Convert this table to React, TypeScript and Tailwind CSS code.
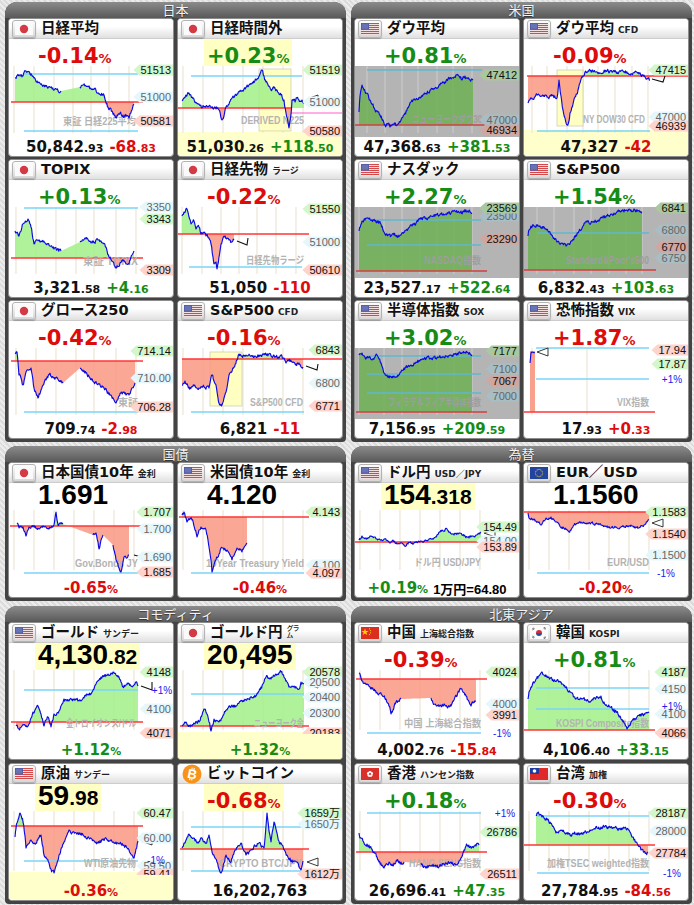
import { useId } from "react";

type TagC = "g" | "r" | "b";
type Sec = "top" | "bond" | "comm";

type Chart = {
  pts: number[][];
  base: number;
  baseX?: [number, number];
  blues?: number[];
  blueX?: [number, number];
  grid?: number[];
  tags: [number, string, TagC][];
  pcts?: [number, number, string][];
  wm: [string, number, number, number];
  gray?: boolean;
  hl?: [number, number, number, number];
  rects?: number[][];
  lines?: [number, number, number, number, string][];
  tri?: [number, number];
  tick?: number[];
  yellowFrom?: number;
  amp?: number;
  noFill?: boolean;
};

type CardData = {
  flag: string;
  name: string;
  sub?: string;
  kind: "idx" | "val" | "btc";
  pct: string;
  neg: boolean;
  pctBox?: boolean;
  val: string[];
  chg?: string[];
  chgNeg?: boolean;
  valBox?: boolean;
  bottomYellow?: boolean;
  extra?: string;
  chart: Chart;
};

const GREEN = "text-[#168c16]";
const RED = "text-[#de0b0b]";
const SF = "Liberation Sans, Noto Sans CJK JP, sans-serif";
const W = 164;

const TAG = { g: "#d3f6cb", r: "#fdd3cc", b: "#e6f7fc" };
const GRAY_TAG = { g: "#a9c8a0", r: "#cfa7a2", b: "#a8bec4" };

// deterministic noise so every run draws the same wiggles
function rng(seed: number) {
  let a = seed >>> 0;
  return () => {
    a = (a + 0x6d2b79f5) >>> 0;
    let t = a;
    t = Math.imul(t ^ (t >>> 15), t | 1);
    t ^= t + Math.imul(t ^ (t >>> 7), t | 61);
    return ((t ^ (t >>> 14)) >>> 0) / 4294967296;
  };
}

function build(pts: number[][], amp: number, seed: number, h: number) {
  const r = rng(seed);
  const out: { x: number; y: number; g: boolean }[] = [{ x: pts[0][0], y: pts[0][1], g: false }];
  let n = 0;
  for (let i = 1; i < pts.length; i++) {
    const [x0, y0] = pts[i - 1];
    const [x1, y1, gp] = pts[i];
    const steps = Math.max(1, Math.round((x1 - x0) / 0.6));
    for (let s = 1; s <= steps; s++) {
      const t = s / steps;
      let y = y0 + (y1 - y0) * t;
      if (!gp && s < steps) {
        n = n * 0.45 + (r() - 0.5) * amp * 2;
        y += n;
      }
      out.push({ x: x0 + (x1 - x0) * t, y: Math.min(h - 1, Math.max(0.5, y)), g: !!gp });
    }
  }
  return out;
}

function textW(t: string) {
  let w = 0;
  for (const ch of t) w += ch === "." ? 3.06 : ch === "万" ? 11 : 6.12;
  return w;
}

function ChartSvg({ c, h, seed }: { c: Chart; h: number; seed: number }) {
  const id = useId().replace(/[^a-zA-Z0-9]/g, "");
  const s = build(c.pts, c.amp ?? 1.6, seed, h);
  const f = (v: number) => v.toFixed(1);
  const line = s.map((p, i) => (i === 0 || p.g ? "M" : "L") + f(p.x) + " " + f(p.y)).join(" ");
  const first = s[0];
  const last = s[s.length - 1];
  const area =
    `M${f(first.x)} ${c.base} ` + s.map((p) => `L${f(p.x)} ${f(p.y)}`).join(" ") + ` L${f(last.x)} ${c.base} Z`;
  const grid = c.grid ?? [5, 25, 45, 65, 85, 105, 125];
  const bx = c.baseX ?? [2, 134];
  const blx = c.blueX ?? [14, 128];
  const tags = c.gray ? GRAY_TAG : TAG;

  return (
    <svg width={W} height={h} viewBox={`0 0 ${W} ${h}`} className="block shrink-0 overflow-visible">
      <defs>
        <clipPath id={id + "a"}>
          <rect x="0" y="-5" width={W} height={c.base + 5} />
        </clipPath>
        <clipPath id={id + "b"}>
          <rect x="0" y={c.base} width={W} height={h - c.base + 5} />
        </clipPath>
      </defs>
      {c.gray && <rect x="0" y="0" width={W} height={h} fill="#b4b4b4" />}
      {c.yellowFrom !== undefined && (
        <rect x="0" y={c.yellowFrom} width={W} height={h - c.yellowFrom} fill="#ffffcc" />
      )}
      {grid.map((gx) => (
        <line key={gx} x1={gx} x2={gx} y1="0" y2={h - 4} stroke={c.gray ? "#c4c4c4" : "#f1ecdf"} strokeWidth="1.6" />
      ))}
      {c.hl && (
        <rect x={c.hl[0]} y={c.hl[1]} width={c.hl[2]} height={c.hl[3]} fill="#ffffc2" stroke="#cfcfb0" strokeWidth="0.8" />
      )}
      {c.rects?.map((r, i) => <rect key={i} x={r[0]} y={r[1]} width={r[2]} height={r[3]} fill="#f9a08c" />)}
      {!c.noFill && (
        <>
          <path d={area} fill={c.gray ? "#6cb052" : "#a2f088"} fillOpacity="0.85" clipPath={`url(#${id}a)`} />
          <path d={area} fill="#fa9882" fillOpacity="0.85" clipPath={`url(#${id}b)`} />
        </>
      )}
      {c.blues?.map((y) => (
        <line key={y} x1={blx[0]} x2={blx[1]} y1={y} y2={y} stroke={c.gray ? "#5fb8cf" : "#7ad6f6"} strokeWidth="1.3" />
      ))}
      <line x1={bx[0]} x2={bx[1]} y1={c.base} y2={c.base} stroke={c.gray ? "#d04040" : "#ff3636"} strokeWidth="1.3" />
      {c.lines?.map((l, i) => (
        <line key={i} x1={l[0]} y1={l[1]} x2={l[2]} y2={l[3]} stroke={l[4]} strokeWidth="1.1" />
      ))}
      <text
        x={c.wm[1]}
        y={c.wm[2]}
        textAnchor="end"
        fontSize="10"
        fontWeight="bold"
        fill={c.gray ? "#9e9e9e" : "#b3b3b3"}
        fontFamily={SF}
        textLength={c.wm[3]}
        lengthAdjust="spacingAndGlyphs"
      >
        {c.wm[0]}
      </text>
      <path d={line} fill="none" stroke="#0a0ae6" strokeWidth="1.15" strokeLinejoin="round" />
      {c.tick && (
        <polyline
          points={`${c.tick[0]},${c.tick[1]} ${c.tick[2]},${c.tick[3]} ${c.tick[4]},${c.tick[5]}`}
          fill="none"
          stroke="#111"
          strokeWidth="1.1"
        />
      )}
      {c.tri && (
        <polygon
          points={`${c.tri[0]},${c.tri[1]} ${c.tri[0] + 11},${c.tri[1] - 4} ${c.tri[0] + 11},${c.tri[1] + 4}`}
          fill="#fff"
          stroke="#222"
          strokeWidth="0.9"
        />
      )}
      {c.tags.map(([y, t, k], i) => {
        const x0 = 162 - textW(t) - 7;
        return (
          <g key={i}>
            <polygon
              points={`${f(x0)},${y} ${f(x0 + 6)},${y - 5.5} ${W},${y - 5.5} ${W},${y + 5.5} ${f(x0 + 6)},${y + 5.5}`}
              fill={tags[k]}
            />
            <text x="162" y={y + 4} textAnchor="end" fontSize="11" fill={k === "b" ? "#666" : "#111"} fontFamily={SF}>
              {t}
            </text>
          </g>
        );
      })}
      {c.pcts?.map(([x, y, t], i) => (
        <text key={i} x={x} y={y + 3.5} textAnchor="middle" fontSize="10" fill="#2020ee" fontFamily={SF}>
          {t}
        </text>
      ))}
    </svg>
  );
}

function Flag({ k }: { k: string }) {
  if (k === "btc")
    return (
      <svg width="20" height="20" viewBox="0 0 20 20" className="ml-[4px] shrink-0">
        <circle cx="10" cy="10" r="9.5" fill="#f7931a" />
        <g transform="rotate(12 10 10)">
          <text x="10.3" y="14.6" textAnchor="middle" fontSize="13" fontWeight="bold" fill="#fff" fontFamily={SF}>
            B
          </text>
          <path d="M8.9 3.6v2.2M11 3.6v2.2M8.9 14.2v2.2M11 14.2v2.2" stroke="#fff" strokeWidth="1.1" />
        </g>
      </svg>
    );
  let inner = null;
  if (k === "jp")
    inner = (
      <>
        <rect width="18" height="12" fill="#fafafa" />
        <circle cx="9" cy="6" r="4.2" fill="#d43a44" />
      </>
    );
  if (k === "us")
    inner = (
      <>
        <rect width="18" height="12" fill="#f6f0f0" />
        {[0, 2, 4, 6, 8, 10].map((y) => (
          <rect key={y} y={y} width="18" height="1.1" fill="#d44a4a" />
        ))}
        <rect width="8" height="6.6" fill="#5360a8" />
        <rect x="1" y="1" width="6" height="4.6" fill="#7d86c0" opacity="0.5" />
      </>
    );
  if (k === "eu")
    inner = (
      <>
        <rect width="18" height="12" fill="#23449e" />
        {Array.from({ length: 12 }).map((_, i) => (
          <circle
            key={i}
            cx={9 + 3.6 * Math.cos((i * Math.PI) / 6)}
            cy={6 + 3.6 * Math.sin((i * Math.PI) / 6)}
            r="0.55"
            fill="#f4d03a"
          />
        ))}
      </>
    );
  if (k === "cn")
    inner = (
      <>
        <rect width="18" height="12" fill="#dc2e1e" />
        <polygon points="4,1.4 4.9,4 7.5,4 5.4,5.5 6.2,8 4,6.5 1.8,8 2.6,5.5 0.5,4 3.1,4" fill="#ffd400" />
        <circle cx="8.5" cy="1.8" r="0.6" fill="#ffd400" />
        <circle cx="9.5" cy="3.6" r="0.6" fill="#ffd400" />
        <circle cx="9.5" cy="5.8" r="0.6" fill="#ffd400" />
        <circle cx="8.5" cy="7.6" r="0.6" fill="#ffd400" />
      </>
    );
  if (k === "kr")
    inner = (
      <>
        <rect width="18" height="12" fill="#fbfbfb" />
        <path d="M6 6a3 3 0 0 1 6 0z" fill="#d0303a" />
        <path d="M6 6a3 3 0 0 0 6 0z" fill="#2050a0" />
        <path d="M2 2.2l2 -1.4M2.6 3l2 -1.4M13.4 1l2 1.4M14 0.2l2 1.4M2 9.8l2 1.4M2.6 9l2 1.4M13.4 11l2 -1.4M14 11.8l2 -1.4" stroke="#222" strokeWidth="0.6" />
      </>
    );
  if (k === "hk")
    inner = (
      <>
        <rect width="18" height="12" fill="#d9302a" />
        {[0, 1, 2, 3, 4].map((i) => {
          const cx = 9 + 2 * Math.cos((i * 2 * Math.PI) / 5 - Math.PI / 2);
          const cy = 6 + 2 * Math.sin((i * 2 * Math.PI) / 5 - Math.PI / 2);
          return <ellipse key={i} cx={cx} cy={cy} rx="1.5" ry="1.1" fill="#fff" transform={`rotate(${i * 72} ${cx} ${cy})`} />;
        })}
      </>
    );
  if (k === "tw")
    inner = (
      <>
        <rect width="18" height="12" fill="#e02a2a" />
        <rect width="9" height="6" fill="#1e3ca0" />
        <circle cx="4.5" cy="3" r="1.8" fill="#fff" />
      </>
    );
  return (
    <div className="ml-[3px] flex h-[18px] w-[24px] shrink-0 items-center justify-center rounded-[3px] border border-[#b3b3b3] bg-gradient-to-b from-[#fdfdfd] to-[#d6d6d6] shadow-[0_1px_1px_rgba(0,0,0,0.25)]">
      <svg width="18" height="12" viewBox="0 0 18 12">
        {inner}
      </svg>
    </div>
  );
}

const CARD_H = { top: "h-[139px]", bond: "h-[136px]", comm: "h-[138px]" };
const BOTTOM_H = { top: "h-[19px]", bond: "h-[23px]", comm: "h-[25px]" };
const CHART_H = { top: 71, bond: 64, comm: 64 };

function Card({ d, sec, seed }: { d: CardData; sec: Sec; seed: number }) {
  const pctCls = d.neg ? RED : GREEN;
  return (
    <div className={`flex flex-col overflow-hidden rounded-[4px] border border-[#8c8c8c] bg-white ${CARD_H[sec]}`}>
      <div className="flex h-[20px] shrink-0 items-center border-b border-[#cdcdcd] bg-gradient-to-b from-white from-40% to-[#e0e0e0]">
        <Flag k={d.flag} />
        <span className="ml-[5px] whitespace-nowrap text-[14.5px] leading-none font-bold text-[#111]">{d.name}</span>
        {d.sub && (
          <span
            className={`ml-[4px] whitespace-nowrap leading-none text-[#222] ${
              d.sub === "㌘" ? "mb-[3px] text-[13px] font-normal" : "mt-[3px] text-[9px] font-bold"
            }`}
          >
            {d.sub}
          </span>
        )}
      </div>

      {d.kind === "val" ? (
        <div className="flex h-[27px] shrink-0 pl-[26px]">
          <span
            className={`h-[27px] px-[3px] font-['Liberation_Sans',Arial,sans-serif] text-[28px] leading-[23px] font-bold text-black ${
              d.valBox ? "bg-[#ffffc4]" : ""
            }`}
          >
            {d.val[0]}
            {d.val[1] && <span className="text-[21px]">{d.val[1]}</span>}
          </span>
        </div>
      ) : (
        <div className="flex h-[27px] shrink-0 pl-[26px]">
          <span
            className={`h-[27px] px-[3px] pt-[6px] leading-[22px] font-bold ${pctCls} ${d.pctBox ? "bg-[#ffffc4]" : ""}`}
          >
            <span className="text-[21px]">{d.pct}</span>
            <span className="text-[13px]">%</span>
          </span>
        </div>
      )}

      <ChartSvg c={d.chart} h={CHART_H[sec]} seed={seed} />

      <div
        className={`flex shrink-0 items-end justify-center pb-[1px] ${BOTTOM_H[sec]} ${
          d.bottomYellow ? "bg-[#ffffcc]" : ""
        }`}
      >
        {d.kind === "val" ? (
          <>
            <span className={`text-[15px] leading-none font-bold ${pctCls}`}>
              {d.pct}
              <span className="text-[11px]">%</span>
            </span>
            {d.extra && (
              <span className="ml-[5px] font-['Liberation_Sans','Noto_Sans_CJK_JP',sans-serif] text-[13px] leading-none font-bold text-black">
                {d.extra}
              </span>
            )}
          </>
        ) : (
          <>
            <span className="text-[15px] leading-none font-bold text-[#111]">
              {d.val[0]}
              {d.val[1] && <span className="text-[11px]">{d.val[1]}</span>}
            </span>
            {d.chg && (
              <span className={`ml-[6px] text-[15px] leading-none font-bold ${d.chgNeg ? RED : GREEN}`}>
                {d.chg[0]}
                {d.chg[1] && <span className="text-[11px]">{d.chg[1]}</span>}
              </span>
            )}
          </>
        )}
      </div>
    </div>
  );
}

const JAPAN: CardData[] = [
  {
    flag: "jp", name: "日経平均", kind: "idx", pct: "-0.14", neg: true,
    val: ["50,842", ".93"], chg: ["-68", ".83"], chgNeg: true,
    chart: {
      base: 36, baseX: [2, 134], blues: [8, 65], blueX: [15, 129], grid: [5, 25, 45, 64, 82, 100, 120],
      pts: [[6, 12], [10, 9], [14, 10], [17, 5], [21, 8], [25, 12], [30, 16], [35, 19], [40, 21], [45, 24], [52, 25], [71, 21, 1], [74, 19], [77, 20], [82, 23], [86, 22], [89, 27], [95, 29], [99, 41], [103, 45], [107, 51], [111, 47], [114, 49], [118, 50], [120, 52], [123, 44], [125, 39]],
      tags: [[4, "51513", "g"], [31, "51000", "b"], [55, "50581", "r"]],
      wm: ["東証 日経225平均", 127, 59, 73],
    },
  },
  {
    flag: "jp", name: "日経時間外", kind: "idx", pct: "+0.23", neg: false, pctBox: true,
    val: ["51,030", ".26"], chg: ["+118", ".50"], bottomYellow: true,
    chart: {
      base: 42, baseX: [0, 113], blues: [10], blueX: [13, 124], hl: [81, 3, 32, 62], yellowFrom: 66,
      lines: [[113, 47, 164, 47, "#ff5ccd"]],
      pts: [[4, 34], [8, 29], [11, 27], [14, 31], [18, 37], [24, 42], [28, 40], [33, 41], [38, 43], [41, 44], [44, 54], [46, 50], [48, 41], [54, 32], [58, 29], [61, 26], [66, 23], [71, 19], [75, 17], [78, 14], [82, 8], [84, 4], [86, 10], [88, 16], [91, 20], [93, 24], [96, 22], [99, 24], [103, 29], [106, 34], [108, 47], [110, 56], [111, 62], [113, 48], [114, 34], [117, 36], [119, 32], [122, 35], [124, 34], [126, 37]],
      tri: [129, 33],
      tags: [[4, "51519", "g"], [36, "51000", "b"], [65, "50580", "r"]],
      wm: ["DERIVED N225", 126, 58, 63],
    },
  },
  {
    flag: "jp", name: "TOPIX", kind: "idx", pct: "+0.13", neg: false,
    val: ["3,321", ".58"], chg: ["+4", ".16"],
    chart: {
      base: 51, blues: [1], blueX: [15, 129], grid: [7, 27, 47, 67, 85, 107, 127],
      pts: [[6, 24], [10, 29], [14, 17], [17, 15], [19, 12], [22, 20], [25, 37], [28, 33], [32, 34], [36, 36], [39, 37], [42, 39], [45, 42], [48, 43], [52, 44], [71, 35, 1], [74, 33], [77, 32], [81, 34], [85, 35], [89, 33], [92, 34], [97, 40], [100, 50], [104, 55], [107, 60], [111, 56], [114, 54], [117, 57], [120, 57], [123, 48], [125, 44]],
      tags: [[0, "3350", "b"], [12, "3343", "g"], [63, "3309", "r"]],
      wm: ["東証 TOPIX", 129, 58, 55],
    },
  },
  {
    flag: "jp", name: "日経先物", sub: "ラージ", kind: "idx", pct: "-0.22", neg: true,
    val: ["51,050"], chg: ["-110"], chgNeg: true,
    chart: {
      base: 27, baseX: [0, 131], blues: [60], blueX: [11, 124], grid: [4, 24, 43, 61, 79, 98, 118],
      pts: [[4, 9], [6, 5], [9, 2], [11, 10], [13, 17], [16, 14], [18, 22], [21, 20], [23, 27], [26, 25], [28, 29], [31, 31], [33, 37], [35, 50], [36, 57], [38, 55], [39, 62], [41, 50], [43, 37], [45, 31], [46, 29], [49, 31], [51, 33], [54, 35], [56, 33]],
      tick: [59, 34, 69, 38, 70, 31],
      tags: [[2, "51550", "g"], [35, "51000", "b"], [63, "50610", "r"]],
      wm: ["日経先物ラージ", 126, 57, 58],
    },
  },
  {
    flag: "jp", name: "グロース250", kind: "idx", pct: "-0.42", neg: true,
    val: ["709", ".74"], chg: ["-2", ".98"], chgNeg: true,
    chart: {
      base: 13, blues: [64], blueX: [15, 129], grid: [7, 27, 47, 67, 85, 107, 127],
      pts: [[6, 5], [8, 4], [10, 27], [12, 30], [14, 37], [17, 24], [20, 22], [22, 20], [25, 40], [27, 45], [29, 50], [32, 42], [34, 37], [37, 32], [40, 27], [44, 29], [47, 30], [50, 33], [54, 35], [71, 20, 1], [74, 22], [77, 25], [81, 30], [85, 34], [90, 36], [95, 40], [99, 44], [102, 47], [105, 52], [107, 55], [110, 48], [114, 44], [117, 47], [120, 47], [123, 40], [126, 35]],
      tags: [[3, "714.14", "g"], [30, "710.00", "b"], [59, "706.28", "r"]],
      wm: ["東証", 129, 58, 20],
    },
  },
  {
    flag: "us", name: "S&P500", sub: "CFD", kind: "idx", pct: "-0.16", neg: true,
    val: ["6,821"], chg: ["-11"], chgNeg: true,
    chart: {
      base: 11, baseX: [4, 164], blues: [64], blueX: [13, 126], hl: [32, 4, 32, 54],
      pts: [[4, 37], [7, 33], [11, 39], [16, 38], [21, 40], [26, 39], [31, 40], [34, 27], [36, 33], [38, 37], [40, 50], [41, 55], [44, 57], [46, 50], [48, 44], [51, 27], [53, 24], [56, 19], [59, 12], [61, 6], [64, 8], [68, 7], [73, 8], [78, 9], [83, 7], [88, 6], [93, 8], [98, 9], [102, 8], [106, 10], [108, 15], [111, 13], [114, 14], [118, 16], [121, 15], [125, 19]],
      tick: [128, 18, 139, 22, 140, 16],
      tags: [[2, "6843", "g"], [35, "6800", "b"], [58, "6771", "r"]],
      wm: ["S&P500 CFD", 125, 58, 53],
    },
  },
];

const US: CardData[] = [
  {
    flag: "us", name: "ダウ平均", kind: "idx", pct: "+0.81", neg: false,
    val: ["47,368", ".63"], chg: ["+381", ".53"],
    chart: {
      gray: true, base: 59, baseX: [0, 132], blues: [4], blueX: [12, 127], grid: [12, 30, 47, 63, 82, 98, 117],
      pts: [[4, 46], [5, 30], [7, 19], [9, 24], [12, 27], [15, 34], [18, 38], [20, 44], [23, 46], [25, 49], [28, 54], [30, 59], [33, 58], [35, 61], [38, 58], [42, 59], [46, 54], [50, 47], [54, 40], [58, 34], [62, 33], [65, 31], [70, 28], [75, 24], [80, 22], [85, 19], [90, 16], [95, 12], [99, 11], [102, 9], [105, 12], [107, 14], [110, 10], [112, 12], [115, 14], [118, 14]],
      tags: [[9, "47412", "g"], [54, "47000", "b"], [64, "46934", "r"]],
      wm: ["ニューヨークダウ30", 127, 57, 70],
    },
  },
  {
    flag: "us", name: "ダウ平均", sub: "CFD", kind: "idx", pct: "-0.09", neg: true,
    val: ["47,327"], chg: ["-42"], chgNeg: true, bottomYellow: true,
    chart: {
      base: 10, baseX: [3, 164], blues: [65], blueX: [13, 126], hl: [33, 4, 26, 56], yellowFrom: 64,
      grid: [8, 23, 43, 59, 74, 91, 108, 124],
      pts: [[4, 37], [8, 33], [13, 29], [18, 30], [23, 31], [28, 30], [33, 32], [35, 14], [37, 30], [39, 44], [41, 52], [43, 59], [45, 55], [46, 47], [49, 38], [51, 31], [54, 24], [56, 17], [59, 10], [61, 6], [66, 4], [71, 6], [76, 7], [82, 5], [88, 6], [93, 6], [99, 5], [104, 7], [109, 7], [115, 8], [121, 11], [124, 12], [126, 14]],
      tick: [128, 13, 139, 16, 141, 10],
      tags: [[4, "47415", "g"], [51, "47000", "b"], [60, "46939", "r"]],
      wm: ["NY DOW30 CFD", 121, 57, 62],
    },
  },
  {
    flag: "us", name: "ナスダック", kind: "idx", pct: "+2.27", neg: false,
    val: ["23,527", ".17"], chg: ["+522", ".64"],
    chart: {
      gray: true, base: 64, baseX: [1, 132], blues: [13, 38], blueX: [12, 126], grid: [4, 29, 47, 65, 82, 99, 117],
      pts: [[4, 24], [6, 17], [7, 14], [10, 13], [14, 12], [18, 13], [22, 14], [26, 17], [29, 25], [32, 27], [36, 29], [39, 28], [42, 30], [46, 28], [49, 25], [53, 22], [57, 19], [61, 16], [66, 12], [71, 11], [76, 9], [81, 8], [86, 7], [91, 7], [96, 6], [101, 5], [106, 4], [109, 5], [112, 4], [115, 5], [117, 6]],
      tags: [[9, "23500", "b"], [1, "23569", "g"], [32, "23290", "r"]],
      wm: ["NASDAQ指数", 126, 57, 57],
    },
  },
  {
    flag: "us", name: "S&P500", kind: "idx", pct: "+1.54", neg: false,
    val: ["6,832", ".43"], chg: ["+103", ".63"],
    chart: {
      gray: true, base: 63, baseX: [0, 132], blues: [26], blueX: [13, 125], grid: [13, 30, 50, 67, 85, 102, 118],
      pts: [[4, 29], [5, 23], [7, 19], [10, 19], [13, 19], [17, 21], [20, 20], [24, 24], [27, 27], [30, 31], [33, 35], [37, 36], [42, 39], [45, 37], [48, 34], [52, 28], [55, 24], [59, 19], [63, 15], [68, 15], [73, 14], [78, 11], [83, 9], [88, 7], [93, 5], [98, 4], [103, 3], [107, 3], [110, 2], [114, 4], [118, 6]],
      tags: [[1, "6841", "g"], [23, "6800", "b"], [51, "6750", "b"], [40, "6770", "r"]],
      wm: ["Standard&Poor's500", 125, 57, 83],
    },
  },
  {
    flag: "us", name: "半導体指数", sub: "SOX", kind: "idx", pct: "+3.02", neg: false,
    val: ["7,156", ".95"], chg: ["+209", ".59"],
    chart: {
      gray: true, base: 64, baseX: [1, 132], blues: [8, 26, 45], blueX: [12, 126], grid: [4, 29, 47, 65, 82, 99, 117],
      pts: [[4, 7], [7, 5], [9, 8], [12, 10], [15, 9], [17, 12], [20, 9], [22, 7], [24, 11], [26, 15], [28, 21], [29, 25], [32, 27], [36, 29], [39, 28], [42, 29], [46, 24], [49, 20], [53, 18], [56, 17], [61, 14], [66, 12], [71, 11], [76, 10], [81, 10], [86, 9], [91, 8], [96, 7], [101, 6], [106, 5], [109, 5], [112, 4], [115, 6], [117, 7]],
      tags: [[3, "7177", "g"], [21, "7100", "b"], [48, "7000", "b"], [33, "7067", "r"]],
      wm: ["フィラデルフィア半導体指数", 126, 58, 93],
    },
  },
  {
    flag: "us", name: "恐怖指数", sub: "VIX", kind: "idx", pct: "+1.87", neg: true,
    val: ["17", ".93"], chg: ["+0", ".33"], chgNeg: true,
    chart: {
      base: 64, baseX: [0, 131], blues: [0, 31], blueX: [12, 125], grid: [8, 63], noFill: true, amp: 0,
      rects: [[6, 3, 5, 61]],
      pts: [[6, 15], [7, 5], [8, 4], [11, 5]],
      tri: [13, 4],
      tags: [[2, "17.94", "r"], [16, "17.87", "g"]],
      pcts: [[148, 31, "+1%"]],
      wm: ["VIX指数", 125, 58, 32],
    },
  },
];

const BONDS: CardData[] = [
  {
    flag: "jp", name: "日本国債10年", sub: "金利", kind: "val", pct: "-0.65", neg: true, val: ["1.691"],
    chart: {
      base: 16, baseX: [1, 134], blues: [63], blueX: [15, 129], amp: 1.3,
      pts: [[8, 13], [10, 18], [12, 16], [14, 17], [17, 26], [19, 20], [20, 17], [24, 17], [29, 18], [32, 17], [35, 17], [39, 18], [42, 18], [45, 15], [46, 8], [47, 2], [48, 10], [49, 15], [52, 14], [54, 14], [84, 25, 1], [87, 23], [89, 32], [90, 39], [92, 30], [94, 25], [104, 35, 1], [106, 44], [107, 50], [110, 58], [112, 62], [114, 52], [115, 47], [118, 48], [120, 45]],
      tick: [125, 45, 136, 48, 137, 43],
      tags: [[2, "1.707", "g"], [19, "1.700", "b"], [47, "1.690", "b"], [62, "1.685", "r"]],
      wm: ["Gov.Bonds JY", 129, 57, 63],
    },
  },
  {
    flag: "us", name: "米国債10年", sub: "金利", kind: "val", pct: "-0.46", neg: true, val: ["4.120"],
    chart: {
      base: 7, baseX: [1, 131], blues: [63], blueX: [13, 126], amp: 1.5,
      pts: [[4, 5], [6, 2], [8, 8], [9, 12], [12, 9], [14, 10], [17, 20], [19, 27], [21, 20], [23, 17], [26, 19], [28, 20], [30, 30], [31, 37], [33, 50], [34, 62], [36, 55], [38, 50], [41, 44], [43, 38], [46, 40], [49, 40], [52, 45], [54, 50], [57, 43], [59, 38], [62, 40], [64, 42], [67, 36], [69, 33]],
      tags: [[2, "4.143", "g"], [55, "4.100", "b"], [63, "4.097", "r"]],
      wm: ["10Year Treasury Yield", 126, 57, 98],
    },
  },
];

const FX: CardData[] = [
  {
    flag: "us", name: "ドル円", sub: "USD／JPY", kind: "val", pct: "+0.19", neg: false, val: ["154", ".318"], valBox: true,
    extra: "1万円=64.80",
    chart: {
      base: 32, baseX: [0, 164], amp: 1.1,
      pts: [[4, 30], [7, 26], [9, 28], [12, 28], [15, 26], [19, 27], [22, 29], [26, 30], [30, 29], [33, 31], [36, 32], [39, 31], [42, 34], [46, 33], [49, 35], [53, 34], [56, 33], [59, 33], [63, 32], [66, 31], [69, 31], [73, 30], [76, 29], [79, 28], [82, 25], [85, 22], [87, 20], [89, 21], [92, 19], [95, 22], [99, 25], [102, 23], [104, 23], [107, 25], [109, 26], [112, 27], [114, 28], [118, 26], [121, 25], [124, 23], [126, 22]],
      tri: [129, 23],
      tags: [[17, "154.49", "g"], [31, "154.00", "b"], [37, "153.89", "r"]],
      wm: ["ドル円 USD/JPY", 126, 56, 67],
    },
  },
  {
    flag: "eu", name: "EUR／USD", kind: "val", pct: "-0.20", neg: true, val: ["1.1560"],
    chart: {
      base: 2, baseX: [0, 130], blues: [63], blueX: [13, 125], amp: 1.1,
      pts: [[4, 3], [5, 8], [8, 9], [10, 10], [14, 12], [17, 15], [20, 11], [22, 8], [25, 8], [27, 7], [30, 10], [32, 12], [35, 14], [38, 17], [42, 19], [45, 22], [48, 18], [50, 15], [54, 13], [57, 12], [62, 13], [67, 13], [72, 14], [77, 15], [82, 16], [87, 18], [92, 17], [97, 17], [102, 16], [107, 15], [111, 17], [115, 18], [118, 16], [120, 15], [123, 12], [125, 10]],
      tri: [128, 13],
      tags: [[2, "1.1583", "g"], [24, "1.1540", "r"], [45, "1.1500", "b"]],
      pcts: [[142, 63, "-1%"]],
      wm: ["EUR/USD", 125, 56, 42],
    },
  },
];

const COMM: CardData[] = [
  {
    flag: "us", name: "ゴールド", sub: "サンデー", kind: "val", pct: "+1.12", neg: false, val: ["4,130", ".82"], valBox: true,
    chart: {
      base: 52, blues: [20], blueX: [15, 129],
      pts: [[7, 56], [10, 59], [13, 56], [15, 55], [18, 57], [20, 54], [22, 48], [24, 42], [27, 38], [29, 36], [31, 41], [32, 44], [34, 52], [35, 56], [37, 50], [39, 47], [41, 54], [42, 57], [44, 50], [45, 44], [48, 43], [50, 41], [53, 34], [55, 29], [58, 31], [60, 31], [64, 29], [67, 29], [70, 31], [72, 31], [75, 28], [77, 26], [80, 25], [82, 24], [85, 19], [87, 14], [90, 10], [92, 7], [95, 6], [99, 4], [102, 3], [104, 2], [107, 5], [109, 7], [112, 12], [114, 17], [117, 15], [119, 14], [122, 16], [124, 16], [127, 12], [129, 16]],
      tick: [132, 16, 143, 20, 143, 12],
      pcts: [[153, 20, "+1%"]],
      tags: [[2, "4148", "g"], [39, "4100", "b"], [63, "4071", "r"]],
      wm: ["金トロイオンス/ドル", 127, 57, 70],
    },
  },
  {
    flag: "jp", name: "ゴールド円", sub: "㌘", kind: "val", pct: "+1.32", neg: false, val: ["20,495"], valBox: true, bottomYellow: true,
    chart: {
      base: 56, baseX: [2, 131], blues: [24], blueX: [13, 126], yellowFrom: 62,
      pts: [[4, 56], [6, 54], [8, 52], [11, 55], [14, 56], [17, 54], [21, 52], [24, 45], [26, 39], [28, 42], [29, 44], [31, 52], [33, 61], [35, 55], [36, 49], [39, 51], [41, 52], [44, 48], [46, 44], [49, 40], [51, 36], [55, 37], [58, 36], [61, 33], [64, 31], [68, 30], [71, 29], [75, 28], [78, 26], [81, 21], [83, 17], [86, 12], [88, 7], [91, 8], [93, 9], [96, 6], [98, 4], [101, 3], [103, 2], [105, 5], [106, 7], [109, 12], [111, 17], [114, 16], [116, 16], [119, 18], [121, 19], [123, 12], [126, 14]],
      tri: [129, 14],
      tags: [[2, "20578", "g"], [12, "20500", "b"], [27, "20400", "b"], [43, "20300", "b"], [63, "20183", "r"]],
      wm: ["ニューヨーク金", 126, 57, 50],
    },
  },
  {
    flag: "us", name: "原油", sub: "サンデー", kind: "val", pct: "-0.36", neg: true, val: ["59", ".98"], valBox: true, bottomYellow: true,
    chart: {
      base: 15, blues: [50], blueX: [15, 129], yellowFrom: 61,
      pts: [[6, 26], [7, 18], [8, 12], [10, 6], [11, 2], [13, 8], [14, 11], [16, 25], [17, 37], [19, 33], [22, 29], [25, 32], [27, 32], [30, 27], [32, 24], [34, 36], [35, 44], [38, 48], [40, 52], [42, 58], [45, 62], [47, 55], [50, 44], [52, 38], [55, 31], [58, 24], [60, 19], [63, 22], [65, 21], [69, 22], [72, 22], [75, 25], [77, 27], [80, 27], [84, 29], [87, 31], [90, 32], [94, 29], [97, 27], [101, 30], [104, 31], [107, 31], [109, 32], [112, 33], [115, 34], [118, 37], [120, 39], [123, 44], [125, 47], [127, 38], [129, 30]],
      tri: [132, 30],
      tags: [[2, "60.47", "g"], [27, "60.00", "b"], [55, "59.50", "b"], [63, "59.41", "r"]],
      pcts: [[147, 49, "-1%"]],
      wm: ["WTI原油先物", 127, 56, 52],
    },
  },
  {
    flag: "btc", name: "ビットコイン", kind: "btc", pct: "-0.68", neg: true, pctBox: true, val: ["16,202,763"],
    chart: {
      base: 38, baseX: [2, 131], blues: [16, 60], blueX: [13, 126],
      pts: [[4, 37], [6, 32], [8, 29], [11, 23], [13, 26], [14, 27], [17, 30], [19, 32], [22, 29], [24, 27], [26, 31], [28, 32], [30, 27], [31, 24], [33, 35], [34, 41], [37, 47], [39, 51], [41, 58], [43, 62], [46, 52], [48, 44], [50, 48], [53, 51], [55, 44], [58, 39], [61, 35], [63, 32], [66, 40], [68, 44], [71, 41], [74, 39], [77, 35], [81, 32], [84, 35], [86, 37], [88, 15], [89, 2], [91, 20], [93, 31], [95, 18], [96, 11], [98, 18], [99, 22], [101, 30], [104, 34], [107, 40], [109, 44], [112, 47], [114, 49], [117, 50], [119, 51], [121, 56], [123, 59], [125, 50]],
      tri: [129, 51],
      tags: [[2, "1659万", "g"], [13, "1650万", "b"], [63, "1612万", "r"]],
      wm: ["CRYPTO BTC/JPY", 124, 56, 83],
    },
  },
];

const ASIA: CardData[] = [
  {
    flag: "cn", name: "中国", sub: "上海総合指数", kind: "idx", pct: "-0.39", neg: true,
    val: ["4,002", ".76"], chg: ["-15", ".84"], chgNeg: true,
    chart: {
      base: 9, baseX: [1, 132], blues: [63], blueX: [12, 126],
      pts: [[4, 3], [6, 8], [7, 11], [10, 13], [12, 14], [15, 17], [17, 19], [20, 21], [24, 24], [27, 25], [31, 29], [34, 36], [36, 44], [38, 40], [41, 32], [43, 31], [46, 29], [76, 28, 1], [78, 33], [82, 36], [85, 35], [89, 34], [92, 37], [96, 36], [99, 30], [102, 26], [104, 22], [106, 19], [108, 22], [111, 26], [113, 30], [116, 36], [118, 33], [121, 31]],
      tags: [[2, "4024", "g"], [34, "4000", "b"], [45, "3991", "r"]],
      pcts: [[147, 63, "-1%"]],
      wm: ["中国 上海総合指数", 126, 57, 77],
    },
  },
  {
    flag: "kr", name: "韓国", sub: "KOSPI", kind: "idx", pct: "+0.81", neg: false,
    val: ["4,106", ".40"], chg: ["+33", ".15"],
    chart: {
      base: 60, baseX: [0, 131], blues: [18, 39], blueX: [12, 125],
      pts: [[4, 29], [5, 22], [7, 17], [10, 13], [12, 9], [15, 6], [17, 3], [20, 5], [23, 6], [26, 8], [30, 11], [33, 10], [37, 12], [40, 16], [43, 19], [46, 22], [50, 27], [53, 28], [57, 29], [62, 30], [67, 31], [72, 28], [77, 26], [80, 32], [83, 36], [87, 37], [90, 39], [94, 44], [97, 49], [100, 53], [103, 59], [105, 55], [107, 52], [110, 50], [113, 47], [116, 46], [120, 44], [123, 43], [125, 42]],
      tags: [[2, "4187", "g"], [19, "4150", "b"], [44, "4100", "b"], [63, "4066", "r"]],
      pcts: [[148, 36, "+1%"]],
      wm: ["KOSPI Composite指数", 125, 57, 93],
    },
  },
  {
    flag: "hk", name: "香港", sub: "ハンセン指数", kind: "idx", pct: "+0.18", neg: false,
    val: ["26,696", ".41"], chg: ["+47", ".35"],
    chart: {
      base: 41, baseX: [1, 132], blues: [2], blueX: [12, 126],
      pts: [[4, 22], [5, 27], [6, 27], [8, 30], [9, 32], [12, 33], [14, 34], [17, 38], [19, 41], [22, 46], [24, 51], [27, 54], [29, 57], [31, 53], [34, 51], [37, 53], [39, 52], [42, 50], [46, 51], [49, 51], [66, 52, 1], [69, 55], [72, 57], [75, 55], [77, 54], [81, 56], [84, 56], [88, 53], [91, 52], [94, 52], [96, 51], [99, 53], [101, 54], [104, 50], [106, 47], [108, 42], [109, 39], [111, 35], [112, 34], [115, 36], [117, 36], [119, 35], [121, 35], [124, 34]],
      tags: [[21, "26786", "g"], [63, "26511", "r"]],
      pcts: [[150, 2, "+1%"]],
      wm: ["HANG SENG指数", 126, 56, 72],
    },
  },
  {
    flag: "tw", name: "台湾", sub: "加権", kind: "idx", pct: "-0.30", neg: true,
    val: ["27,784", ".95"], chg: ["-84", ".56"], chgNeg: true,
    chart: {
      base: 34, baseX: [0, 131], blues: [5, 62], blueX: [13, 125],
      pts: [[12, 4], [13, 2], [16, 4], [18, 6], [20, 7], [23, 9], [26, 11], [28, 14], [30, 17], [32, 22], [35, 20], [37, 19], [40, 21], [42, 22], [45, 23], [47, 24], [50, 23], [53, 22], [56, 22], [60, 22], [63, 21], [67, 19], [70, 18], [73, 17], [77, 16], [80, 16], [84, 16], [87, 16], [90, 17], [93, 17], [97, 17], [100, 17], [103, 18], [105, 19], [107, 23], [108, 26], [110, 29], [112, 31], [115, 35], [117, 39], [120, 41], [122, 42], [124, 41]],
      tags: [[2, "28187", "g"], [20, "28000", "b"], [42, "27784", "r"]],
      pcts: [[148, 62, "-1%"]],
      wm: ["加権TSEC weighted指数", 125, 56, 102],
    },
  },
];

const GAP_Y = { top: "gap-y-[2px]", bond: "gap-y-[2px]", comm: "gap-y-[3px]" };

function Panel({ title, sec, cards, seed }: { title: string; sec: Sec; cards: CardData[]; seed: number }) {
  return (
    <div className="w-[341px] overflow-hidden rounded-t-[12px] rounded-b-[4px] bg-[#434343]">
      <div className="h-[16px] bg-gradient-to-b from-[#8c8c8c] to-[#595959] text-center font-['Noto_Sans_CJK_JP',sans-serif] text-[13px] leading-[16px] text-[#f2f2f2] [text-shadow:0_1px_1px_rgba(0,0,0,0.5)]">
        {title}
      </div>
      <div className={`grid grid-cols-2 gap-x-[3px] px-[3px] pb-[3px] ${GAP_Y[sec]}`}>
        {cards.map((d, i) => (
          <Card key={d.name + i} d={d} sec={sec} seed={seed * 31 + i * 7 + 3} />
        ))}
      </div>
    </div>
  );
}

export default function App() {
  return (
    <div className="min-h-[905px] w-[694px] bg-[image:repeating-linear-gradient(45deg,#ececec_0px,#ececec_2px,#dcdcdc_2px,#dcdcdc_4px)] pt-[2px] pl-[5px] font-['DejaVu_Sans','Noto_Sans_CJK_JP',sans-serif]">
      <div className="flex gap-[5px]">
        <Panel title="日本" sec="top" cards={JAPAN} seed={1} />
        <Panel title="米国" sec="top" cards={US} seed={2} />
      </div>
      <div className="mt-[4px] flex gap-[5px]">
        <Panel title="国債" sec="bond" cards={BONDS} seed={3} />
        <Panel title="為替" sec="bond" cards={FX} seed={4} />
      </div>
      <div className="mt-[5px] flex gap-[5px]">
        <Panel title="コモディティ" sec="comm" cards={COMM} seed={5} />
        <Panel title="北東アジア" sec="comm" cards={ASIA} seed={6} />
      </div>
    </div>
  );
}
